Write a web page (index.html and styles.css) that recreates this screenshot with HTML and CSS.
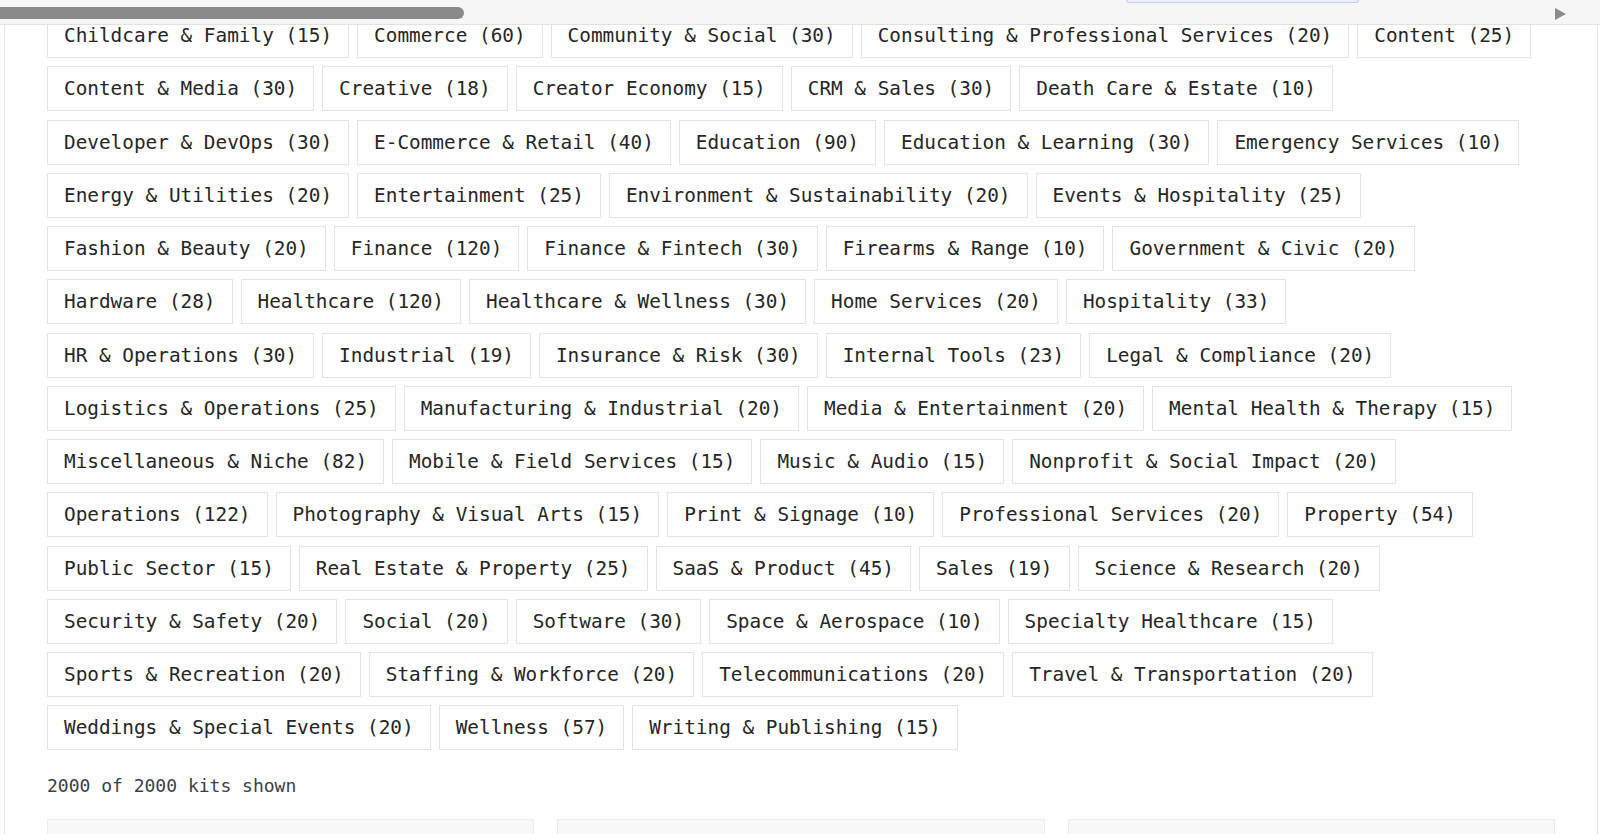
FILE: index.html
```html
<!DOCTYPE html>
<html lang="en">

<head>
    <meta charset="UTF-8">
    <meta name="viewport" content="width=device-width, initial-scale=1.0">
    <title>Kits</title>
    <link rel="stylesheet" href="styles.css">
</head>

<body>
    <div id="scrollbar">
        <div class="focusEdge"></div>
        <div class="thumb"></div>
        <div class="arrowRight"></div>
    </div>

    <div id="panel">
        <div id="tags">
            <span class="tag">Childcare &amp; Family (15)</span>
            <span class="tag">Commerce (60)</span>
            <span class="tag">Community &amp; Social (30)</span>
            <span class="tag">Consulting &amp; Professional Services (20)</span>
            <span class="tag">Content (25)</span>
            <span class="tag">Content &amp; Media (30)</span>
            <span class="tag">Creative (18)</span>
            <span class="tag">Creator Economy (15)</span>
            <span class="tag">CRM &amp; Sales (30)</span>
            <span class="tag">Death Care &amp; Estate (10)</span>
            <span class="tag">Developer &amp; DevOps (30)</span>
            <span class="tag">E-Commerce &amp; Retail (40)</span>
            <span class="tag">Education (90)</span>
            <span class="tag">Education &amp; Learning (30)</span>
            <span class="tag">Emergency Services (10)</span>
            <span class="tag">Energy &amp; Utilities (20)</span>
            <span class="tag">Entertainment (25)</span>
            <span class="tag">Environment &amp; Sustainability (20)</span>
            <span class="tag">Events &amp; Hospitality (25)</span>
            <span class="tag">Fashion &amp; Beauty (20)</span>
            <span class="tag">Finance (120)</span>
            <span class="tag">Finance &amp; Fintech (30)</span>
            <span class="tag">Firearms &amp; Range (10)</span>
            <span class="tag">Government &amp; Civic (20)</span>
            <span class="tag">Hardware (28)</span>
            <span class="tag">Healthcare (120)</span>
            <span class="tag">Healthcare &amp; Wellness (30)</span>
            <span class="tag">Home Services (20)</span>
            <span class="tag">Hospitality (33)</span>
            <span class="tag">HR &amp; Operations (30)</span>
            <span class="tag">Industrial (19)</span>
            <span class="tag">Insurance &amp; Risk (30)</span>
            <span class="tag">Internal Tools (23)</span>
            <span class="tag">Legal &amp; Compliance (20)</span>
            <span class="tag">Logistics &amp; Operations (25)</span>
            <span class="tag">Manufacturing &amp; Industrial (20)</span>
            <span class="tag">Media &amp; Entertainment (20)</span>
            <span class="tag">Mental Health &amp; Therapy (15)</span>
            <span class="tag">Miscellaneous &amp; Niche (82)</span>
            <span class="tag">Mobile &amp; Field Services (15)</span>
            <span class="tag">Music &amp; Audio (15)</span>
            <span class="tag">Nonprofit &amp; Social Impact (20)</span>
            <span class="tag">Operations (122)</span>
            <span class="tag">Photography &amp; Visual Arts (15)</span>
            <span class="tag">Print &amp; Signage (10)</span>
            <span class="tag">Professional Services (20)</span>
            <span class="tag">Property (54)</span>
            <span class="tag">Public Sector (15)</span>
            <span class="tag">Real Estate &amp; Property (25)</span>
            <span class="tag">SaaS &amp; Product (45)</span>
            <span class="tag">Sales (19)</span>
            <span class="tag">Science &amp; Research (20)</span>
            <span class="tag">Security &amp; Safety (20)</span>
            <span class="tag">Social (20)</span>
            <span class="tag">Software (30)</span>
            <span class="tag">Space &amp; Aerospace (10)</span>
            <span class="tag">Specialty Healthcare (15)</span>
            <span class="tag">Sports &amp; Recreation (20)</span>
            <span class="tag">Staffing &amp; Workforce (20)</span>
            <span class="tag">Telecommunications (20)</span>
            <span class="tag">Travel &amp; Transportation (20)</span>
            <span class="tag">Weddings &amp; Special Events (20)</span>
            <span class="tag">Wellness (57)</span>
            <span class="tag">Writing &amp; Publishing (15)</span>
        </div>

        <p class="count">2000 of 2000 kits shown</p>

        <div id="kits">
            <div class="kit"></div>
            <div class="kit"></div>
            <div class="kit"></div>
        </div>
    </div>
</body>

</html>
```

FILE: styles.css
```css
html,
body {
    margin: 0;
    height: 100%;
    overflow: hidden;
    background-color: white;
}

body {
    font-family: "DejaVu Sans Mono", "Liberation Mono", monospace;
    color: #262626;
}

#scrollbar {
    position: fixed;
    top: 0;
    left: 0;
    right: 0;
    height: 24px;
    background-color: #f6f6f6;
    border-bottom: 1px solid #e2e2e2;
    z-index: 2;
}

.thumb {
    position: absolute;
    top: 7px;
    left: -10px;
    width: 474px;
    height: 12px;
    border-radius: 6px;
    background-color: #8a8a8a;
}

.arrowRight {
    position: absolute;
    top: 8px;
    left: 1555px;
    width: 0;
    height: 0;
    border-top: 6px solid transparent;
    border-bottom: 6px solid transparent;
    border-left: 11px solid #8c8c8c;
}

.focusEdge {
    position: absolute;
    top: 0;
    left: 1126px;
    width: 231px;
    height: 2px;
    background-color: #e9eefb;
    border: 1px solid #c3cff0;
    border-top: none;
    border-radius: 0 0 4px 4px;
}

#panel {
    margin: 0 2px 0 4px;
    padding: 13px 42px 0 42px;
    border-left: 1px solid #e6e6e6;
    border-right: 1px solid #e6e6e6;
    min-height: 100%;
    box-sizing: border-box;
}

#tags {
    display: flex;
    flex-wrap: wrap;
    gap: 8.25px 8px;
    padding-right: 10px;
}

.tag {
    padding: 8px 16px;
    border: 1px solid #e3e3e3;
    font-size: 19.38px;
    line-height: 27px;
    white-space: nowrap;
    background-color: white;
}

.count {
    margin: 22px 0 20px 0;
    font-size: 18px;
    line-height: 27px;
    color: #3b404a;
}

#kits {
    display: grid;
    grid-template-columns: 1fr 1fr 1fr;
    gap: 23px;
}

.kit {
    height: 200px;
    background-color: #f8f8f8;
    border: 1px solid #ebebeb;
}
```
